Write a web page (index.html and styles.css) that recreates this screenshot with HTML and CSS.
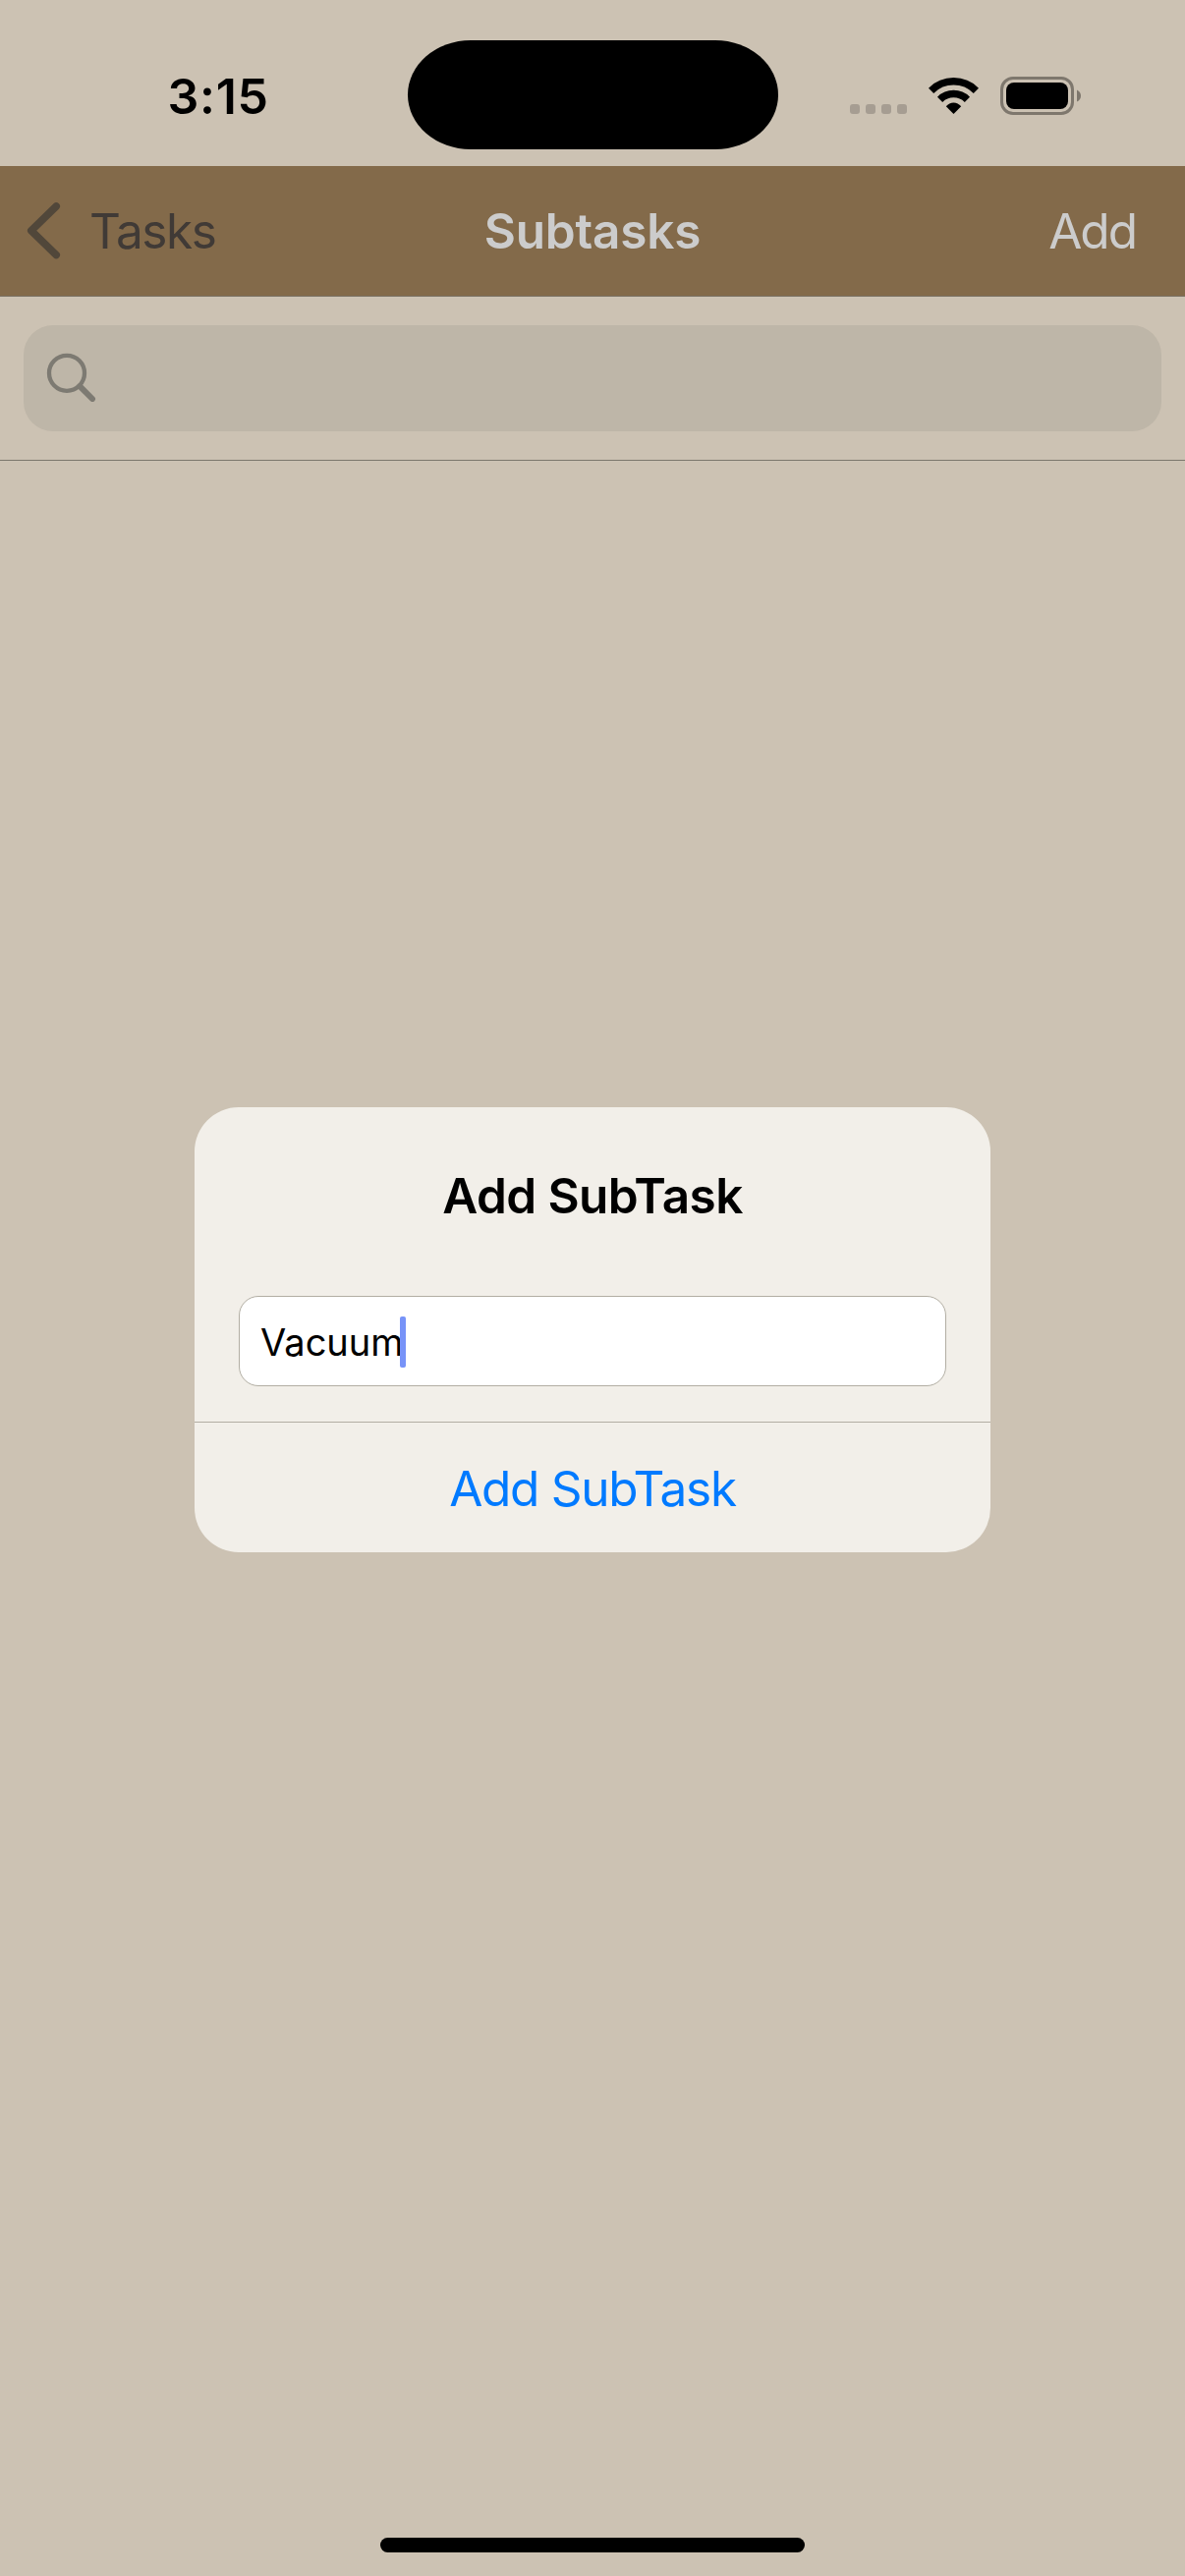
FILE: index.html
```
<!DOCTYPE html>
<html lang="en">
<head>
<meta charset="utf-8">
<title>Subtasks</title>
<link rel="stylesheet" href="styles.css">
</head>
<body>
<div class="screen">
  <header class="status-bar">
    <div class="status-left"><span class="time">3:15</span></div>
    <div class="island"></div>
    <div class="status-right">
      <svg class="cellular" width="58" height="10" viewBox="0 0 58 10" aria-hidden="true">
        <rect x="0" width="10" height="10" rx="3"/>
        <rect x="16" width="10" height="10" rx="3"/>
        <rect x="32" width="10" height="10" rx="3"/>
        <rect x="48" width="10" height="10" rx="3"/>
      </svg>
      <svg class="wifi" width="51" height="38" viewBox="0 0 51 38" aria-hidden="true">
        <path class="wifi-arc" d="M2.6 13.3A32.4 32.4 0 0 1 48.4 13.3"/>
        <path class="wifi-arc" d="M11.6 22.3A19.7 19.7 0 0 1 39.4 22.3"/>
        <path d="M25.5 37L17.8 29.3Q21 25.5 25.5 25.5T33.2 29.3Z"/>
      </svg>
      <svg class="battery" width="83" height="39" viewBox="0 0 83 39" aria-hidden="true">
        <rect class="battery-shell" x="1.5" y="1.5" width="72" height="36" rx="11.5"/>
        <rect x="6" y="6" width="63" height="27" rx="8"/>
        <path class="battery-cap" d="M78 13.5Q82 15.5 82 19.5T78 25.5Z"/>
      </svg>
    </div>
  </header>

  <nav class="nav-bar">
    <a class="back">
      <svg width="36" height="60" viewBox="0 0 36 60" aria-hidden="true"><path d="M31.2 5L5.8 29.8L31.2 54.5"/></svg>
      <span class="back-label">Tasks</span>
    </a>
    <h1 class="nav-title">Subtasks</h1>
    <a class="add">Add</a>
  </nav>

  <div class="search-bar">
    <div class="search-field">
      <svg width="52" height="52" viewBox="0 0 52 52" aria-hidden="true">
        <circle cx="22" cy="22.8" r="18"/>
        <path d="M35.2 36.1L48 49"/>
      </svg>
    </div>
  </div>

  <main class="content">
    <section class="dialog">
      <h2 class="dialog-title">Add SubTask</h2>
      <div class="dialog-field"><span class="dialog-value">Vacuum</span><span class="caret"></span></div>
      <button class="dialog-action" type="button">Add SubTask</button>
    </section>
  </main>

  <footer class="home"><div class="home-indicator"></div></footer>
</div>
</body>
</html>
```

FILE: styles.css
```
* { box-sizing: border-box; }

body {
  margin: 0;
  background: #ccc2b3;
  font-family: Inter, "Liberation Sans", sans-serif;
  font-size: 49.5px;
  line-height: 60px;
}

h1, h2 { margin: 0; font-size: inherit; font-weight: 600; }

.screen {
  display: flex;
  flex-direction: column;
  width: 1206px;
  height: 2622px;
  overflow: hidden;
}

.status-bar {
  display: grid;
  grid-template-columns: 414.5px 377px 414.5px;
  height: 169px;
}

.status-left { padding: 68px 0 0 170.5px; }

.time { display: block; font-size: 50px; font-weight: 600; letter-spacing: 0.7px; }

.island {
  height: 111px;
  margin-top: 41.4px;
  border-radius: 64px / 55.5px;
  background: #000;
}

.status-right { display: flex; align-items: flex-start; padding-left: 73.5px; }
.status-right svg { flex: none; display: block; }

.cellular { margin-top: 106px; fill: #a69d92; }
.wifi { margin: 79px 0 0 22px; }
.wifi-arc { fill: none; stroke: #000; stroke-width: 7.4; }
.battery { margin: 78px 0 0 22px; }
.battery-shell { fill: none; stroke: #7e776d; stroke-width: 3; }
.battery-cap { fill: #7e776d; }

.nav-bar {
  display: grid;
  grid-template-columns: 1fr auto 1fr;
  align-items: center;
  height: 133px;
  background: #836a4a;
  border-bottom: 1px solid #7b7264;
}

.back { display: flex; align-items: center; padding-left: 26px; color: #403a36; }
.back svg { display: block; fill: none; stroke: #51473a; stroke-width: 7.6; stroke-linecap: round; stroke-linejoin: round; }
.back-label { margin-left: 29px; letter-spacing: -1.4px; }
.nav-title { color: #ccc; letter-spacing: -0.2px; }
.add { justify-self: end; padding-right: 50px; color: #ccc; letter-spacing: -2px; }

.search-bar { height: 167px; padding: 29px 24px 0; border-bottom: 1px solid #7b776c; }

.search-field {
  display: flex;
  height: 108px;
  padding: 26px 22px;
  border-radius: 30px;
  background: #beb6a8;
}
.search-field svg { fill: none; stroke: #7d7a72; stroke-width: 4.3; stroke-linecap: round; }
.search-field path { stroke-width: 6; }

.content { flex: 1; display: flex; flex-direction: column; align-items: center; padding-top: 658px; }

.dialog {
  display: flex;
  flex-direction: column;
  width: 810px;
  height: 453px;
  padding-top: 60px;
  border-radius: 45px;
  overflow: hidden;
  background: #f2efe9;
  text-align: center;
}

.dialog-title { letter-spacing: -0.57px; }

.dialog-field {
  display: flex;
  height: 92px;
  margin: 72px 45px 36px;
  padding: 20px 0 0 21px;
  border: 1px solid #b2aea3;
  border-radius: 20px;
  background: #fff;
}
.dialog-value { margin-top: 3px; font-size: 38px; line-height: 46px; letter-spacing: 0; }
.caret { width: 5.5px; height: 52px; margin-left: -3.2px; border-radius: 2px; background: #7793f8; }

.dialog-action {
  flex: 1;
  padding: 2px 0 0;
  border: 0;
  border-top: 1px solid #b2aea3;
  background: none;
  color: #007aff;
  font: inherit;
  letter-spacing: -1.27px;
}

.home { padding-bottom: 24px; }
.home-indicator { width: 432px; height: 15px; margin: 0 auto; border-radius: 7.5px; background: #000; }
```
